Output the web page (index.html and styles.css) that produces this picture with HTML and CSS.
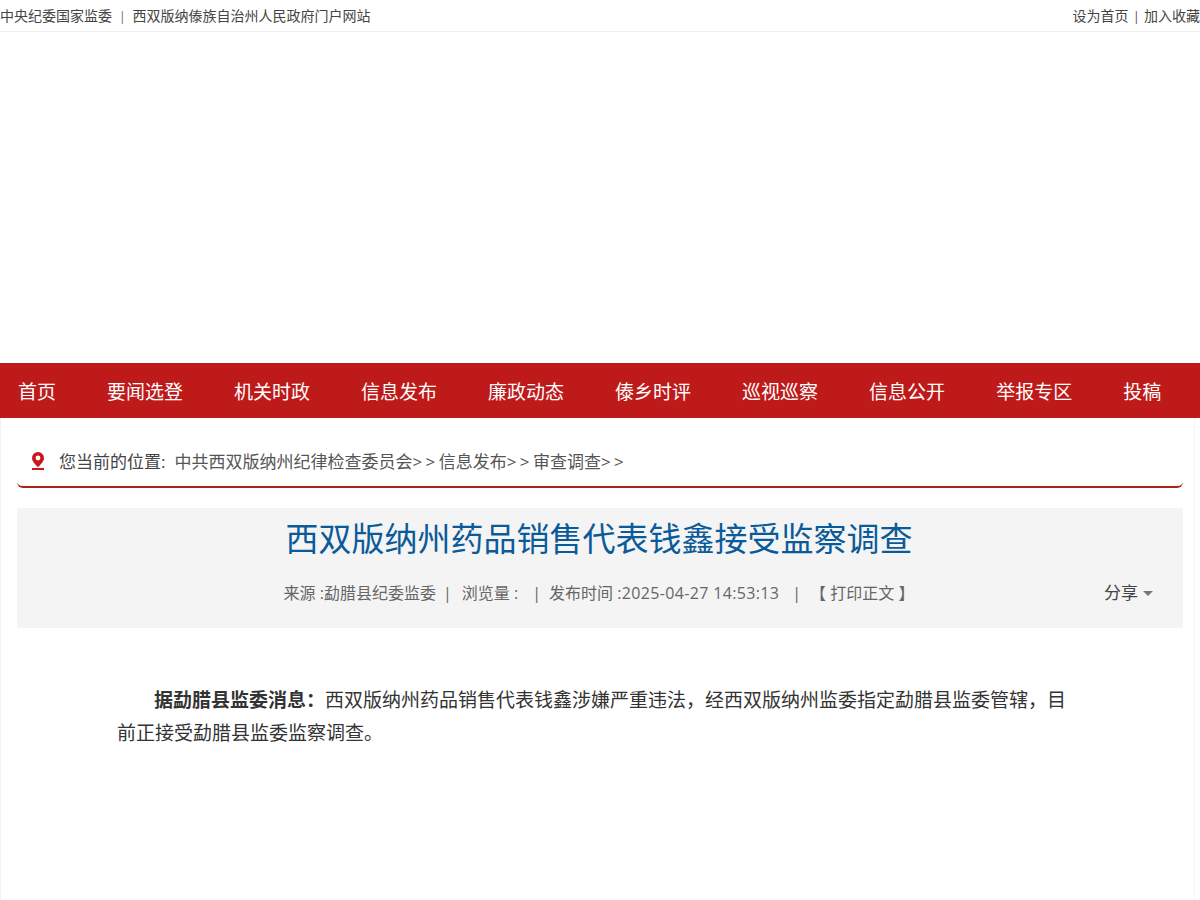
FILE: index.html
```html
<!DOCTYPE html>
<html lang="zh-CN">
<head>
<meta charset="utf-8">
<title>西双版纳州药品销售代表钱鑫接受监察调查</title>
<link rel="stylesheet" href="styles.css">
</head>
<body>
<header class="topbar">
  <div class="top-left"><a>中央纪委国家监委</a><span class="top-sep">|</span><a>西双版纳傣族自治州人民政府门户网站</a></div>
  <div class="top-right"><a>设为首页</a><span class="top-sep2">|</span><a>加入收藏</a></div>
</header>
<div class="banner"></div>
<nav class="nav">
  <a>首页</a><a>要闻选登</a><a>机关时政</a><a>信息发布</a><a>廉政动态</a><a>傣乡时评</a><a>巡视巡察</a><a>信息公开</a><a>举报专区</a><a>投稿</a>
</nav>
<main class="page">
  <div class="crumb">
    <svg class="pin" width="14" height="18" viewBox="0 0 14 18"><path fill="#c9171e" fill-rule="evenodd" d="M7 0a6 6 0 0 1 6 6c0 3.400-3.500 6.600-6 9.200C4.500 12.600 1 9.400 1 6a6 6 0 0 1 6-6zm0 3.600a2.400 2.400 0 1 0 0 4.800 2.400 2.400 0 0 0 0-4.800z"/><rect x="1" y="16" width="12" height="2" fill="#c9171e"/></svg>
    <span class="crumb-label">您当前的位置:</span>
    <span class="crumb-path">中共西双版纳州纪律检查委员会<span class="gt">&gt;&gt;</span>信息发布<span class="gt">&gt;&gt;</span>审查调查<span class="gt">&gt;&gt;</span></span>
  </div>
  <section class="head">
    <h1 class="title">西双版纳州药品销售代表钱鑫接受监察调查</h1>
    <div class="meta">
      <span class="meta-main">来源 :勐腊县纪委监委<i class="bar bar-a">|</i>浏览量 :<i class="bar bar-b">|</i>发布时间 <span class="date">:2025-04-27 14:53:13</span><i class="bar bar-c">|</i>【 打印正文 】</span>
      <span class="share">分享<b class="caret"></b></span>
    </div>
  </section>
  <article class="body">
    <p><strong>据勐腊县监委消息：</strong>西双版纳州药品销售代表钱鑫涉嫌严重违法，经西双版纳州监委指定勐腊县监委管辖，目前正接受勐腊县监委监察调查。</p>
  </article>
</main>
</body>
</html>
```
FILE: styles.css
```css
* { box-sizing: border-box; }
html, body { margin: 0; padding: 0; }
body {
  height: 900px;
  overflow: hidden;
  background: #fff;
  color: #333;
  font-family: "Open Sans", "Noto Sans CJK SC", sans-serif;
}
.topbar {
  height: 32px;
  display: flex;
  justify-content: space-between;
  align-items: center;
  padding-bottom: 2px;
  border-bottom: 1px solid #eee;
  font-size: 14px;
  color: #444;
}
.top-sep { margin: 0 7px; color: #666; font-size: 12px; }
.top-sep2 { margin: 0 4.5px; color: #444; font-size: 12px; }
.banner { height: 331px; }
.nav {
  height: 55px;
  background: #be1a1a;
  display: flex;
  align-items: center;
  gap: 51px;
  padding-left: 18px;
  font-size: 19px;
  color: #fff;
}
.page {
  height: 482px;
  padding: 0 17px;
  box-shadow: inset 1px 0 0 #f2f2f2;
  background: linear-gradient(#f6f6f6, #f6f6f6) no-repeat 1194px 0 / 1px 100%;
}
.crumb {
  height: 70px;
  display: flex;
  align-items: center;
  padding: 16px 0 0 14px;
  border-bottom: 2px solid #ad2217;
  border-radius: 0 0 6px 6px;
  font-size: 17px;
  color: #444;
}
.pin { flex: none; margin: 2px 14px 0 0; }
.crumb-label { margin-right: 9px; }
.crumb-path { color: #555; }
.gt { letter-spacing: 3.4px; }
.head {
  margin-top: 20px;
  height: 120px;
  background: #f4f4f4;
  position: relative;
  padding-top: 9px;
  text-align: center;
}
.title {
  margin: 0;
  padding-right: 2px;
  font-size: 33px;
  line-height: 44px;
  font-weight: 400;
  color: #0b5a99;
}
.meta {
  margin-top: 20px;
  padding-right: 2px;
  font-size: 16px;
  line-height: 24px;
  color: #666;
}
.date { letter-spacing: .35px; }
.bar { font-style: normal; }
.bar-a { margin: 0 10px 0 7px; }
.bar-b { margin: 0 8px 0 14px; }
.bar-c { margin: 0 9px 0 13px; }
.share {
  position: absolute;
  left: 1087px;
  top: 73px;
  font-size: 17px;
  color: #444;
  display: flex;
  align-items: center;
}
.caret {
  width: 0;
  height: 0;
  margin-left: 5px;
  border-left: 5px solid transparent;
  border-right: 5px solid transparent;
  border-top: 5px solid #777;
}
.body {
  padding: 56px 100px 0;
  font-size: 19px;
  line-height: 33px;
  color: #333;
}
.body p { margin: 0; text-indent: 37px; }
.body strong { font-weight: 700; }
```
